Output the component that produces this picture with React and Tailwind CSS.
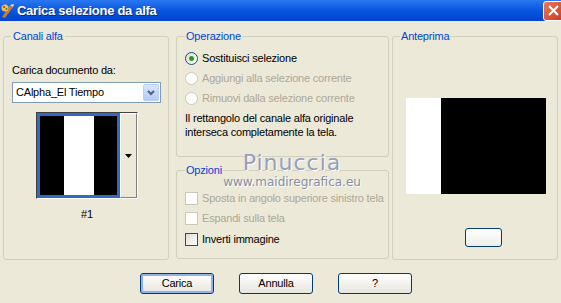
import React from "react";

const font = { fontFamily: '"Liberation Sans", Arial, sans-serif' };

const Radio = ({ checked, disabled, label }) => (
  <div className="flex items-center h-[20px]">
    <div
      className={`w-[13px] h-[13px] rounded-full border flex items-center justify-center ${
        disabled
          ? "border-[#cac8bb] bg-white"
          : "border-[#1c5180] bg-gradient-to-br from-[#dcdcd7] to-white"
      }`}
    >
      {checked && <div className="w-[5px] h-[5px] rounded-full bg-[#21a121]" />}
    </div>
    <span className={`ml-[4px] whitespace-nowrap ${disabled ? "text-[#aca899]" : "text-black"}`}>{label}</span>
  </div>
);

const Check = ({ disabled, label }) => (
  <div className="flex items-center h-[20px]">
    <div
      className={`w-[13px] h-[13px] shrink-0 border ${
        disabled
          ? "border-[#cac8bb] bg-white"
          : "border-[#1c5180] bg-gradient-to-br from-[#dcdcd7] to-white"
      }`}
    />
    <span className={`ml-[4px] whitespace-nowrap ${disabled ? "text-[#aca899]" : "text-black"}`}>{label}</span>
  </div>
);

const Button = ({ children, isDefault, className = "" }) => (
  <button
    className={`h-[21px] rounded-[3px] border border-[#003c74] bg-gradient-to-b from-white to-[#e6e5dd] text-black text-[11px] ${
      isDefault ? "shadow-[inset_0_0_0_2px_#8fb1ed]" : ""
    } ${className}`}
  >
    {children}
  </button>
);

const App = () => {
  return (
    <div className="w-[561px] h-[303px] bg-[#ece9d8] text-[11px] leading-[13px] tracking-[-0.2px] text-black relative overflow-hidden" style={font}>
      {/* Title bar */}
      <div className="h-[21px] flex items-center bg-gradient-to-b from-[#2a78f0] via-[#0656e0] to-[#0444cc]">
        <svg width="14" height="16" viewBox="0 0 14 16" className="ml-[1px]">
          <path d="M1 14 L9 2 L12 4 L4 15 Z" fill="#c87a2e" />
          <circle cx="4" cy="5" r="3.5" fill="#f0c050" />
          <circle cx="3" cy="4" r="1" fill="#d02020" />
          <circle cx="5.5" cy="6" r="1" fill="#2a9a3a" />
          <path d="M9 2 L12 4 L13 1 Z" fill="#e8e8e8" />
        </svg>
        <span className="ml-[2px] text-white font-bold text-[13px] tracking-[-0.3px] [text-shadow:1px_1px_0_#0a2a80]">
          Carica selezione da alfa
        </span>
        <div className="ml-auto mr-[-3px] w-[21px] h-[20px] rounded-[3px] border border-white bg-gradient-to-br from-[#e8795a] to-[#c83a1a] flex items-center justify-center">
          <svg width="11" height="11" viewBox="0 0 11 11">
            <path d="M1 1 L10 10 M10 1 L1 10" stroke="white" strokeWidth="2" />
          </svg>
        </div>
      </div>

      {/* Groups */}
      <div className="flex pl-[3px] pt-[9px]">
        {/* Canali alfa */}
        <fieldset className="w-[166px] h-[230px] border border-[#d0d0bf] rounded-[3px] p-0 m-0">
          <legend className="ml-[7px] px-[2px] text-[#0046d5]">Canali alfa</legend>
          <div className="pl-[8px] mt-[21px]">Carica documento da:</div>
          <div className="ml-[8px] mt-[5px] w-[149px] h-[21px] border border-[#7f9db9] bg-white flex items-center">
            <span className="ml-[3px]">CAlpha_El Tiempo</span>
            <div className="ml-auto mr-[1px] w-[16px] h-[17px] rounded-[2px] bg-gradient-to-b from-[#d8e4fc] to-[#b6cbf7] border border-[#b8cdf8] flex items-center justify-center">
              <svg width="8" height="6" viewBox="0 0 8 6">
                <path d="M1 1 L4 4 L7 1" stroke="#4d6185" strokeWidth="2" fill="none" />
              </svg>
            </div>
          </div>
          <div className="ml-[32px] mt-[9px] flex w-[102px] h-[87px] border-t border-l border-[#404040] border-b-white border-r-white border-b border-r">
            <div className="w-[83px] h-[85px] border-[3px] border-[#316ac5] flex">
              <div className="w-[24px] bg-black" />
              <div className="w-[30px] bg-white" />
              <div className="flex-1 bg-black" />
            </div>
            <div className="flex-1 h-[85px] bg-[#ece9d8] border-l border-t border-white border-r border-b border-r-[#808080] border-b-[#808080] flex items-center justify-center">
              <svg width="7" height="4" viewBox="0 0 7 4">
                <path d="M0 0 L7 0 L3.5 4 Z" fill="black" />
              </svg>
            </div>
          </div>
          <div className="mt-[9px] text-center pl-[2px]">#1</div>
        </fieldset>

        {/* Middle column */}
        <div className="ml-[7px] w-[213px] flex flex-col">
          <fieldset className="h-[127px] border border-[#d0d0bf] rounded-[3px] p-0 m-0">
            <legend className="ml-[8px] px-[1px] text-[#0046d5]">Operazione</legend>
            <div className="pl-[8px] mt-[5px]">
              <Radio checked label="Sostituisci selezione" />
              <Radio disabled label="Aggiungi alla selezione corrente" />
              <Radio disabled label="Rimuovi dalla selezione corrente" />
              <div className="mt-[3px] leading-[14px]">
                Il rettangolo del canale alfa originale
                <br />
                interseca completamente la tela.
              </div>
            </div>
          </fieldset>
          <fieldset className="mt-[7px] h-[95px] border border-[#d0d0bf] rounded-[3px] p-0 m-0">
            <legend className="ml-[8px] px-[1px] text-[#0046d5]">Opzioni</legend>
            <div className="pl-[8px] mt-[11px]">
              <Check disabled label="Sposta in angolo superiore sinistro tela" />
              <Check disabled label="Espandi sulla tela" />
              <div className="mt-[1px]">
                <Check label="Inverti immagine" />
              </div>
            </div>
          </fieldset>
        </div>

        {/* Anteprima */}
        <fieldset className="ml-[3px] w-[166px] h-[230px] border border-[#d0d0bf] rounded-[3px] p-0 m-0">
          <legend className="ml-[7px] px-[1px] text-[#0046d5]">Anteprima</legend>
          <div className="ml-[13px] mt-[55px] flex w-[140px] h-[96px]">
            <div className="w-[35px] bg-white" />
            <div className="flex-1 bg-black" />
          </div>
          <div className="mt-[34px] ml-[72px] w-[37px] h-[19px] rounded-[3px] border border-[#003c74] bg-gradient-to-b from-white to-[#eeeeea]" />
        </fieldset>
      </div>

      {/* Buttons */}
      <div className="flex ml-[140px] mt-[13px] gap-[25px]">
        <Button isDefault className="w-[74px]">Carica</Button>
        <Button className="w-[74px]">Annulla</Button>
        <Button className="w-[74px]">?</Button>
      </div>

      {/* Watermark */}
      <div className="absolute left-[230px] top-[151px] w-[124px] flex flex-col items-center pointer-events-none tracking-normal">
        <span className="text-[22px] leading-[24px] tracking-[1px] text-[#97a0ba] [text-shadow:1px_1px_0_#ffffff]" style={{ fontFamily: '"DejaVu Sans", sans-serif' }}>
          Pinuccia
        </span>
        <span className="text-[12px] leading-[14px] text-[#868ea6] [text-shadow:1px_1px_0_#ffffff]" style={{ fontFamily: '"DejaVu Sans", sans-serif' }}>
          www.maidiregrafica.eu
        </span>
      </div>
    </div>
  );
};

export default App;
